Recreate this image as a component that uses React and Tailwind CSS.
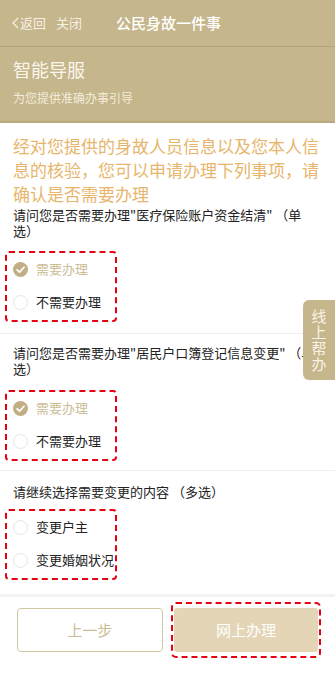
import React from "react";

const font = { fontFamily: '"Noto Sans CJK SC", "Noto Sans", sans-serif' };

function Checked() {
  return (
    <svg width="15" height="15" viewBox="0 0 16 16" className="shrink-0">
      <circle cx="8" cy="8" r="8" fill="#c2ae84" />
      <path d="M4.3 8.3 L7 10.8 L11.8 5.6" fill="none" stroke="#fff" strokeWidth="1.8" strokeLinecap="round" strokeLinejoin="round" />
    </svg>
  );
}
function Empty() {
  return <span className="w-[15px] h-[15px] rounded-full border border-[#e6e6e6] shrink-0 bg-white" />;
}

function Option({ checked, label }) {
  return (
    <div className="flex items-center h-[26px] gap-[8px]">
      {checked ? <Checked /> : <Empty />}
      <span className={`text-[13px] whitespace-nowrap ${checked ? "text-[#cbbd95]" : "text-[#222]"}`}>{label}</span>
    </div>
  );
}

function Box({ children }) {
  return (
    <div className="px-[5px]">
      <div className="w-[112px] border-2 border-dashed border-[#e60012] rounded-[4px] pl-[6px] pt-[3px] pb-[5px] flex flex-col gap-[7px]">
        {children}
      </div>
    </div>
  );
}

export default function App() {
  return (
    <div className="relative w-[335px] h-[677px] bg-white overflow-hidden" style={font}>
      <div className="bg-[#c6b68c]">
        <div className="h-[47px] flex items-center border-b border-[#b5a47a] px-[12px]">
          <span className="text-[13px] text-[#f5f0e4] w-[104px] flex items-center">
            <svg width="7" height="12" viewBox="0 0 7 12" className="mr-[1px]">
              <path d="M6 1 L1 6 L6 11" fill="none" stroke="#f5f0e4" strokeWidth="1.2" />
            </svg>
            返回<span className="ml-[10px]">关闭</span>
          </span>
          <span className="text-[15px] font-medium text-white">公民身故一件事</span>
        </div>
        <div className="h-[76px] px-[13px] pt-[9px] border-b-[2px] border-[#baa97c]">
          <div className="text-[18px] leading-[26px] text-[#faf6ec]">智能导服</div>
          <div className="text-[12px] leading-[16px] mt-[8px] text-[#f3ecdb]">为您提供准确办事引导</div>
        </div>
      </div>

      <div className="px-[13px] pt-[11px]">
        <p className="text-[17px] leading-[24px] text-[#e7b66c]">
          经对您提供的身故人员信息以及您本人信息的核验，您可以申请办理下列事项，请确认是否需要办理
        </p>
        <p className="text-[13px] leading-[16px] text-[#222] mt-[1px] pr-[4px]">
          请问您是否需要办理"医疗保险账户资金结清" （单选）
        </p>
      </div>
      <div className="mt-[12px]">
        <Box>
          <Option checked label="需要办理" />
          <Option label="不需要办理" />
        </Box>
      </div>
      <div className="h-px bg-[#eeeeee] mt-[11px]" />

      <div className="px-[13px] pt-[11px]">
        <p className="text-[13px] leading-[16px] text-[#222] pr-[4px]">
          请问您是否需要办理"居民户口簿登记信息变更" （单选）
        </p>
      </div>
      <div className="mt-[13px]">
        <Box>
          <Option checked label="需要办理" />
          <Option label="不需要办理" />
        </Box>
      </div>
      <div className="h-px bg-[#eeeeee] mt-[9px]" />

      <div className="px-[13px] pt-[13px]">
        <p className="text-[13px] leading-[16px] text-[#222]">请继续选择需要变更的内容 （多选）</p>
      </div>
      <div className="mt-[9px]">
        <Box>
          <Option label="变更户主" />
          <Option label="变更婚姻状况" />
        </Box>
      </div>
      <div className="h-[3px] bg-[#f3f3f3] mt-[14px]" />

      <div className="flex items-center pl-[17px] pt-[5px] gap-[8px]">
        <button className="w-[146px] h-[44px] rounded-[4px] border border-[#d2c7a3] bg-white text-[15px] text-[#cbbd94]">
          上一步
        </button>
        <div className="border-2 border-dashed border-[#e60012] rounded-[5px] px-[1px] py-[4px]">
          <button className="block w-[144px] h-[44px] rounded-[3px] bg-[#e3d5b6] text-[15px] text-white">
            网上办理
          </button>
        </div>
      </div>

      <div className="absolute right-0 top-[300px] w-[32px] h-[80px] rounded-l-[6px] bg-[#c6b68c] flex flex-col items-center justify-center text-[15px] leading-[16px] text-[#f8f3e6]">
        <span>线</span>
        <span>上</span>
        <span>帮</span>
        <span>办</span>
      </div>
    </div>
  );
}
